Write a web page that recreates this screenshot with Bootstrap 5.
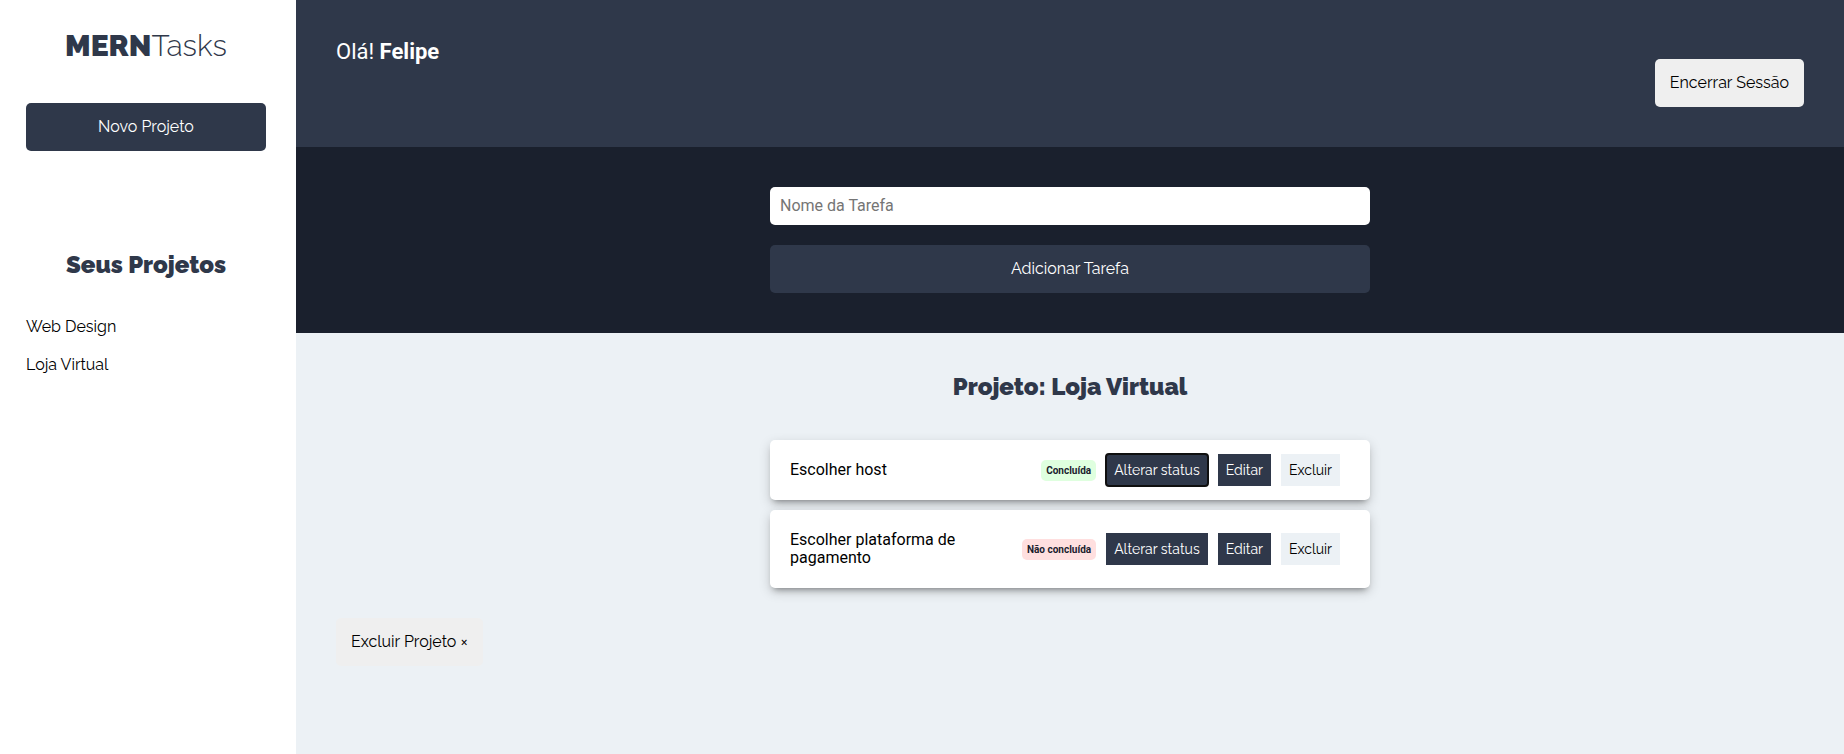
<!DOCTYPE html>
<html lang="pt-BR">
<head>
<meta charset="utf-8">
<meta name="viewport" content="width=device-width, initial-scale=1">
<title>MERNTasks</title>
<link rel="stylesheet" href="https://cdn.jsdelivr.net/npm/bootstrap@5.3.0/dist/css/bootstrap.min.css">
<style>
  :root { --ink: #2f384a; --night: #1a202d; --mist: #ecf1f5; --titles: Raleway, Lato, sans-serif; }
  body { font-family: Roboto, sans-serif; font-size: 16px; line-height: 18px; color: #000; background: var(--mist); }
  .side-panel { flex: 0 0 296px; padding: 26px 30px 26px 26px; }
  .brand-title { font: 300 30px/40px var(--titles); color: var(--ink); margin-bottom: 37px; }
  .brand-title span { font-weight: 900; }
  .section-title { font: 900 24px/30px var(--titles); color: var(--ink); }
  .btn-task { font: 400 16px/18px var(--titles); padding: 15px; border: 0; border-radius: 5px; }
  .btn-ink, .btn-ink:hover { background: var(--ink); color: #fff; }
  .btn-pale, .btn-pale:hover { background: #efefef; color: #000; }
  .new-project { margin-bottom: 99px; }
  .project-list { margin-top: 38px; gap: 20px; }
  .project-link { font: 400 16px/18px var(--titles); color: #000; text-decoration: none; }
  .top-bar { background: var(--ink); padding: 40px; min-height: 147px; }
  .greeting { font-size: 22px; line-height: 24px; color: #fff; }
  .form-area { background: var(--night); padding: 40px; }
  .column-narrow { max-width: 600px; }
  .task-input, .task-input:focus { height: 38px; padding: 9px 10px 11px; border: 0; border-radius: 5px; font-size: 16px; line-height: 18px; }
  .task-input::placeholder { color: #757575; }
  .add-task { margin-top: 20px; }
  .task-area { padding: 39px 40px; }
  .task-list { margin-top: 38px; gap: 10px; }
  .task-item { background: #fff; border-radius: 5px; padding: 14px 30px 14px 20px; min-height: 60px; gap: 10px; box-shadow: 0 5px 6px -4px rgba(0,0,0,.4), 0 4px 12px rgba(0,0,0,.18); }
  .task-item p { padding: 7px 0; }
  .task-actions { gap: 10px; }
  .state-tag { font-size: 10px; font-weight: 700; line-height: 21px; padding: 0 5px; border-radius: 5px; color: var(--night); }
  .state-done { background: #dfffdf; }
  .state-open { background: #ffdfdf; }
  .btn-mini { font: 400 14px/20px var(--titles); padding: 6px 8px; border: 0; border-radius: 0; }
  .btn-mist, .btn-mist:hover { background: var(--mist); color: #000; }
  .is-current { outline: 2px solid #101010; outline-offset: -1px; border-radius: 3px; }
  .remove-project { margin-top: 30px; }
</style>
</head>
<body>
<div class="d-flex min-vh-100">
  <aside class="side-panel bg-white">
    <h1 class="brand-title text-center"><span>MERN</span>Tasks</h1>
    <button type="button" class="btn btn-task btn-ink new-project w-100">Novo Projeto</button>
    <h2 class="section-title text-center mb-0">Seus Projetos</h2>
    <ul class="project-list list-unstyled d-flex flex-column mb-0">
      <li><a class="project-link" href="#">Web Design</a></li>
      <li><a class="project-link" href="#">Loja Virtual</a></li>
    </ul>
  </aside>
  <div class="flex-grow-1">
    <header class="top-bar d-flex justify-content-between">
      <p class="greeting mb-0">Olá! <strong>Felipe</strong></p>
      <nav class="align-self-end"><button type="button" class="btn btn-task btn-pale">Encerrar Sessão</button></nav>
    </header>
    <main>
      <section class="form-area">
        <form class="column-narrow mx-auto">
          <input type="text" class="form-control task-input" placeholder="Nome da Tarefa" aria-label="Nome da Tarefa">
          <button type="button" class="btn btn-task btn-ink w-100 add-task">Adicionar Tarefa</button>
        </form>
      </section>
      <section class="task-area">
        <h2 class="section-title text-center mb-0">Projeto: Loja Virtual</h2>
        <ul class="task-list column-narrow mx-auto list-unstyled d-flex flex-column mb-0">
          <li class="task-item d-flex align-items-center justify-content-between">
            <p class="mb-0">Escolher host</p>
            <div class="task-actions d-flex align-items-center flex-shrink-0">
              <span class="state-tag state-done">Concluída</span>
              <button type="button" class="btn btn-mini btn-ink is-current">Alterar status</button>
              <button type="button" class="btn btn-mini btn-ink">Editar</button>
              <button type="button" class="btn btn-mini btn-mist">Excluir</button>
            </div>
          </li>
          <li class="task-item d-flex align-items-center justify-content-between">
            <p class="mb-0">Escolher plataforma de pagamento</p>
            <div class="task-actions d-flex align-items-center flex-shrink-0">
              <span class="state-tag state-open">Não concluída</span>
              <button type="button" class="btn btn-mini btn-ink">Alterar status</button>
              <button type="button" class="btn btn-mini btn-ink">Editar</button>
              <button type="button" class="btn btn-mini btn-mist">Excluir</button>
            </div>
          </li>
        </ul>
        <button type="button" class="btn btn-task btn-pale remove-project">Excluir Projeto ×</button>
      </section>
    </main>
  </div>
</div>
<script src="https://cdn.jsdelivr.net/npm/bootstrap@5.3.0/dist/js/bootstrap.bundle.min.js"></script>
</body>
</html>
